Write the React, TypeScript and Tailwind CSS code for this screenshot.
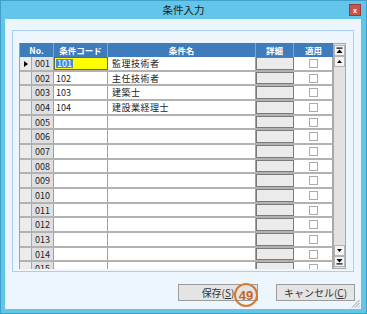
import React from "react";

const rows = [
  { no: "001", code: "101", name: "監理技術者" },
  { no: "002", code: "102", name: "主任技術者" },
  { no: "003", code: "103", name: "建築士" },
  { no: "004", code: "104", name: "建設業経理士" },
  { no: "005", code: "", name: "" },
  { no: "006", code: "", name: "" },
  { no: "007", code: "", name: "" },
  { no: "008", code: "", name: "" },
  { no: "009", code: "", name: "" },
  { no: "010", code: "", name: "" },
  { no: "011", code: "", name: "" },
  { no: "012", code: "", name: "" },
  { no: "013", code: "", name: "" },
  { no: "014", code: "", name: "" },
  { no: "015", code: "", name: "" },
];

const font = { fontFamily: '"Noto Sans CJK JP", "Noto Sans", sans-serif' };

function ScrollBtn({ dir }: { dir: "top" | "up" | "down" | "bottom" }) {
  return (
    <div className="h-[11px] w-full bg-[#f4f4f4] border border-[#b4b4b4] flex items-center justify-center">
      <svg width="7" height="7" viewBox="0 0 7 7">
        {dir === "top" && (
          <>
            <rect x="0.5" y="0.5" width="6" height="1.2" fill="#000" />
            <path d="M0.5 6 L3.5 2.5 L6.5 6 Z" fill="#000" />
          </>
        )}
        {dir === "up" && <path d="M1 5 L3.5 2 L6 5 Z" fill="#000" />}
        {dir === "down" && <path d="M1 2 L3.5 5 L6 2 Z" fill="#000" />}
        {dir === "bottom" && (
          <>
            <path d="M0.5 1 L3.5 4.5 L6.5 1 Z" fill="#000" />
            <rect x="0.5" y="5.3" width="6" height="1.2" fill="#000" />
          </>
        )}
      </svg>
    </div>
  );
}

export default function App() {
  return (
    <div
      className="relative w-[367px] h-[314px] bg-[#62c6ea] border border-[#3e9fc8] flex flex-col"
      style={font}
    >
      {/* Title bar */}
      <div className="h-[18px] flex items-center justify-center text-[10.5px] text-[#1b1b1b] leading-none">
        条件入力
      </div>
      <div className="absolute left-[348px] top-[3px] w-[12px] h-[12px] bg-[#c9544e] border border-[#9a3d38] flex items-center justify-center">
        <span className="text-[7px] leading-none text-white font-bold">x</span>
      </div>

      {/* Client area */}
      <div className="relative ml-[4px] w-[356px] h-[290px] bg-[#eef6fd] pt-[11px] px-[7px]">
        {/* Group box */}
        <div className="w-[342px] h-[242px] border border-[#a9d1ee] pt-[12px] pl-[6px]">
          <div className="w-[327px] h-[226px] flex">
            <div className="w-[314px] h-[226px] flex flex-col border-l border-[#a0a0a0]">
              {/* Header */}
              <div className="h-[14px] flex bg-[#3f7cbb] text-white font-bold text-[8.5px] leading-none shrink-0">
                <div className="w-[34px] border-r border-[#7fa6d2] flex items-center justify-center">No.</div>
                <div className="w-[54px] border-r border-[#7fa6d2] flex items-center justify-center">条件コード</div>
                <div className="w-[148px] border-r border-[#7fa6d2] flex items-center justify-center">条件名</div>
                <div className="w-[38px] border-r border-[#7fa6d2] flex items-center justify-center">詳細</div>
                <div className="w-[39px] flex items-center justify-center">適用</div>
              </div>
              {/* Body */}
              <div className="h-[212px] overflow-hidden flex flex-col">
                {rows.map((r, i) => (
                  <div
                    key={r.no}
                    className={
                      (i % 3 === 1 ? "h-[14px]" : "h-[15px]") +
                      " shrink-0 flex border-b-2 border-[#b2b2b2] text-[9px] leading-none text-[#222]"
                    }
                  >
                    <div className="w-[12px] bg-[#ececec] border-r border-[#a8a8a8] flex items-center justify-center">
                      {i === 0 && (
                        <svg width="4" height="6" viewBox="0 0 4 6">
                          <path d="M0 0 L4 3 L0 6 Z" fill="#000" />
                        </svg>
                      )}
                    </div>
                    <div className="w-[22px] bg-[#dfdfdf] border-r border-[#a0a0a0] flex items-center pl-[3px]">
                      {r.no}
                    </div>
                    {i === 0 ? (
                      <div className="w-[54px] bg-[#ffff00] border border-[#6b6b3a] flex items-center pl-[1px]">
                        <span className="bg-[#3d8fe0] text-white px-[1px]">{r.code}</span>
                      </div>
                    ) : (
                      <div className="w-[54px] bg-white border-r border-[#a0a0a0] flex items-center pl-[2px]">
                        {r.code}
                      </div>
                    )}
                    <div className="w-[148px] bg-white border-r border-[#a0a0a0] flex items-center pl-[4px] tracking-[0.5px]">
                      {r.name}
                    </div>
                    <div className="w-[38px] bg-[#ebebeb] border border-[#7a7a7a]" />
                    <div className="w-[39px] bg-white border-r border-[#a8a8a8] flex items-center justify-center">
                      <div className="w-[9px] h-[9px] border border-[#ababab] bg-white" />
                    </div>
                  </div>
                ))}
              </div>
            </div>
            {/* Scrollbar */}
            <div className="w-[13px] h-[226px] border border-[#a8a8a8] bg-[#e2e2e2] flex flex-col py-[1px]">
              <ScrollBtn dir="top" />
              <ScrollBtn dir="up" />
              <div className="flex-1" />
              <ScrollBtn dir="down" />
              <ScrollBtn dir="bottom" />
            </div>
          </div>
        </div>

        {/* Buttons */}
        <div className="mt-[12px] flex justify-end gap-[18px] pr-[-1px] mr-[-1px]">
          <div className="w-[80px] h-[17px] bg-[#e4e4e4] border border-[#9c9c9c] flex items-center justify-center text-[10px] text-[#333] leading-none">
            保存(<span className="underline">S</span>)
          </div>
          <div className="w-[79px] h-[17px] bg-[#e4e4e4] border border-[#9c9c9c] flex items-center justify-center text-[10px] text-[#333] leading-none">
            キャンセル(<span className="underline">C</span>)
          </div>
        </div>

        {/* Resize grip */}
        <svg className="absolute left-[346px] top-[280px]" width="9" height="9" viewBox="0 0 9 9">
          <path d="M8.5 1 L1 8.5 M8.5 4 L4 8.5 M8.5 7 L7 8.5" stroke="#8a9aa8" strokeWidth="1" />
        </svg>
      </div>

      {/* Annotation */}
      <div className="absolute left-[233px] top-[282px] w-[24px] h-[24px] rounded-full border-2 border-[#d57a30] flex items-center justify-center">
        <span className="text-[13px] font-bold text-[#c8661f] leading-none" style={{ fontFamily: '"Liberation Sans", sans-serif' }}>
          49
        </span>
      </div>
    </div>
  );
}
